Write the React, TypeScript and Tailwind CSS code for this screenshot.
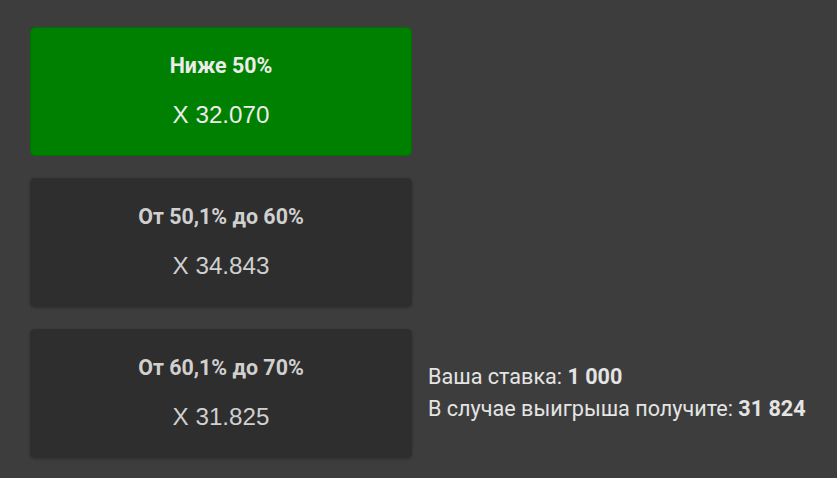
import React from "react";

const cards = [
  { title: "Ниже 50%", value: "X 32.070", active: true },
  { title: "От 50,1% до 60%", value: "X 34.843", active: false },
  { title: "От 60,1% до 70%", value: "X 31.825", active: false },
];

export default function App() {
  return (
    <div className="w-[837px] h-[478px] bg-[#3d3d3d] pl-[30px] pt-[27px]" style={{ fontFamily: "Roboto, sans-serif" }}>
      <div className="flex flex-col gap-[22px] w-[382px]">
        {cards.map((c, i) => (
          <div key={i} className="relative">
            <div
              className={
                "h-[129px] rounded-[5px] flex flex-col items-center justify-center " +
                (c.active
                  ? "bg-[#008000] border border-[#006e00]"
                  : "bg-[#2e2e2e] shadow-[0_1px_3px_rgba(0,0,0,0.25)]")
              }
            >
              <div className={"text-[21.4px] font-bold leading-none -mt-[1px] " + (c.active ? "text-[#ececec]" : "text-[#d0d0d0]")}>
                {c.title}
              </div>
              <div
                className={"mt-[27px] text-[24.2px] leading-none " + (c.active ? "text-[#ececec]" : "text-[#d0d0d0]")}
                style={{ fontFamily: '"Liberation Sans", Arial, sans-serif' }}
              >
                {c.value}
              </div>
            </div>
            {i === 2 && (
              <div className="absolute left-[398px] top-[32px] text-[21.6px] leading-[32px] text-[#e4e4e4] whitespace-nowrap">
                <div>
                  Ваша ставка: <b>1 000</b>
                </div>
                <div>
                  В случае выигрыша получите: <b>31 824</b>
                </div>
              </div>
            )}
          </div>
        ))}
      </div>
    </div>
  );
}
